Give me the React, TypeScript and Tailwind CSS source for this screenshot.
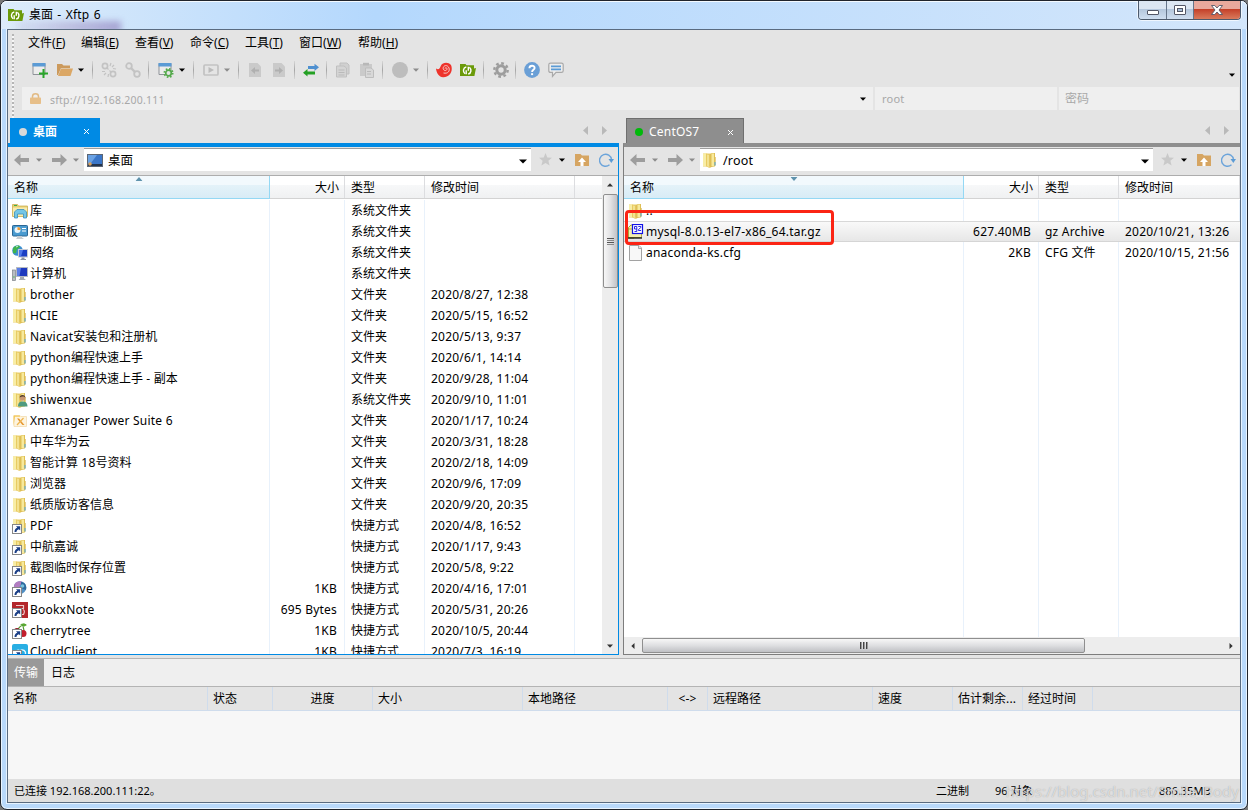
import type { ReactNode } from "react";
import clsx from "clsx";

type IconName =
    | "library" | "panel" | "network" | "computer" | "folder" | "user" | "xmanager"
    | "folderLink" | "bhost" | "bookx" | "cherry" | "cloud" | "archive" | "file";

type Entry = {
    icon: IconName;
    name: string;
    size?: string;
    type?: string;
    date?: string;
};

const localFiles: Entry[] = [
    { icon: "library", name: "库", type: "系统文件夹" },
    { icon: "panel", name: "控制面板", type: "系统文件夹" },
    { icon: "network", name: "网络", type: "系统文件夹" },
    { icon: "computer", name: "计算机", type: "系统文件夹" },
    { icon: "folder", name: "brother", type: "文件夹", date: "2020/8/27, 12:38" },
    { icon: "folder", name: "HCIE", type: "文件夹", date: "2020/5/15, 16:52" },
    { icon: "folder", name: "Navicat安装包和注册机", type: "文件夹", date: "2020/5/13, 9:37" },
    { icon: "folder", name: "python编程快速上手", type: "文件夹", date: "2020/6/1, 14:14" },
    { icon: "folder", name: "python编程快速上手 - 副本", type: "文件夹", date: "2020/9/28, 11:04" },
    { icon: "user", name: "shiwenxue", type: "系统文件夹", date: "2020/9/10, 11:01" },
    { icon: "xmanager", name: "Xmanager Power Suite 6", type: "文件夹", date: "2020/1/17, 10:24" },
    { icon: "folder", name: "中车华为云", type: "文件夹", date: "2020/3/31, 18:28" },
    { icon: "folder", name: "智能计算 18号资料", type: "文件夹", date: "2020/2/18, 14:09" },
    { icon: "folder", name: "浏览器", type: "文件夹", date: "2020/9/6, 17:09" },
    { icon: "folder", name: "纸质版访客信息", type: "文件夹", date: "2020/9/20, 20:35" },
    { icon: "folderLink", name: "PDF", type: "快捷方式", date: "2020/4/8, 16:52" },
    { icon: "folderLink", name: "中航嘉诚", type: "快捷方式", date: "2020/1/17, 9:43" },
    { icon: "folderLink", name: "截图临时保存位置", type: "快捷方式", date: "2020/5/8, 9:22" },
    { icon: "bhost", name: "BHostAlive", size: "1KB", type: "快捷方式", date: "2020/4/16, 17:01" },
    { icon: "bookx", name: "BookxNote", size: "695 Bytes", type: "快捷方式", date: "2020/5/31, 20:26" },
    { icon: "cherry", name: "cherrytree", size: "1KB", type: "快捷方式", date: "2020/10/5, 20:44" },
    { icon: "cloud", name: "CloudClient", size: "1KB", type: "快捷方式", date: "2020/7/3, 16:19" },
];

const remoteFiles: Entry[] = [
    { icon: "folder", name: ".." },
    { icon: "archive", name: "mysql-8.0.13-el7-x86_64.tar.gz", size: "627.40MB", type: "gz Archive", date: "2020/10/21, 13:26" },
    { icon: "file", name: "anaconda-ks.cfg", size: "2KB", type: "CFG 文件", date: "2020/10/15, 21:56" },
];

const menus = [
    { label: "文件", key: "F", w: "w-[53px]" },
    { label: "编辑", key: "E", w: "w-[54px]" },
    { label: "查看", key: "V", w: "w-[55px]" },
    { label: "命令", key: "C", w: "w-[55px]" },
    { label: "工具", key: "T", w: "w-[54px]" },
    { label: "窗口", key: "W", w: "w-[59px]" },
    { label: "帮助", key: "H", w: "w-[60px]" },
];

const transferCols = [
    { label: "名称", w: "w-[200px]", cls: "pl-[5px]" },
    { label: "状态", w: "w-[65px]", cls: "pl-[5px]" },
    { label: "进度", w: "w-[100px]", cls: "justify-center" },
    { label: "大小", w: "w-[150px]", cls: "pl-[5px]" },
    { label: "本地路径", w: "w-[145px]", cls: "pl-[5px]" },
    { label: "<->", w: "w-[40px]", cls: "justify-center" },
    { label: "远程路径", w: "w-[165px]", cls: "pl-[5px]" },
    { label: "速度", w: "w-[80px]", cls: "pl-[5px]" },
    { label: "估计剩余...", w: "w-[70px]", cls: "pl-[5px]" },
    { label: "经过时间", w: "w-[70px]", cls: "pl-[5px]" },
];

// Latin runs are tracked a little wider than the Chinese ones
function T({ children }: { children: string }) {
    return (
        <span className="whitespace-pre">
            {children.split(/([\x20-\x7e]+)/).map((part, i) =>
                i % 2 ? <span key={i} className="tracking-[0.21px]">{part}</span> : part
            )}
        </span>
    );
}

function Svg({ children, className }: { children: ReactNode; className?: string }) {
    return (
        <svg viewBox="0 0 16 16" width="16" height="16" fill="none" className={clsx("shrink-0", className)}>
            {children}
        </svg>
    );
}

function Caret({ className }: { className?: string }) {
    return (
        <svg viewBox="0 0 6 4" width="6" height="4" className={clsx("shrink-0", className)}>
            <path d="M0 0.5h6L3 3.7z" fill="currentColor" />
        </svg>
    );
}

function Sep({ className }: { className: string }) {
    return <div className={clsx("h-[18px] w-px shrink-0 bg-linear-to-b from-[#d6d6d6] via-[#a6a6a6] to-[#d6d6d6]", className)} />;
}

function FolderShape() {
    return (
        <>
            <path d="M1 1.500h12v13H1z" fill="#e9cf6f" />
            <path d="M1 1.500h4v12.500H1z" fill="#f8eda6" />
            <path d="M4 1.500l3.500 1V16L4 14.200z" fill="#e8cb63" />
            <path d="M5 2.500l2 .6V15l-2-.8z" fill="#f3e291" />
            <path d="M7.500 2.500L10 1h3v13l-3 .7-2.500 1.300z" fill="#dfbf55" />
            <path d="M9.500 1.500H12v12.500H9.500z" fill="#f7e99c" />
            <path d="M13.200 5v8.500" stroke="#dcbc58" strokeWidth="1" />
            <path d="M13 10v3.500" stroke="#4da9e6" strokeWidth="1" />
        </>
    );
}

function Shortcut() {
    return (
        <>
            <rect x="0.500" y="6.500" width="9" height="9" fill="#fff" stroke="#868686" />
            <path d="M2.500 14c0-2.500 1-3.800 2.800-4.300L4 8.300h4.200v4.200L6.900 11.200c-1.500.4-2.400 1.300-2.400 2.800z" fill="#1b3f86" />
        </>
    );
}

function FileIcon({ name }: { name: IconName }) {
    switch (name) {
        case "library":
            return (
                <Svg>
                    <path d="M0.500 1.500h5l1 1.500h9v10.500H.5z" fill="#e8cf6e" stroke="#cdb053" strokeWidth="0.800" />
                    <path d="M1 4.500h14v8.500H1z" fill="#f7ebae" />
                    <path d="M2 2.500h3" stroke="#3fae49" strokeWidth="1" />
                    <path d="M2.500 15V9L5 6.500h7L14.500 9v6h-3v-4h-6v4z" fill="#74c6e6" stroke="#3b8fbd" strokeWidth="0.800" />
                </Svg>
            );
        case "panel":
            return (
                <Svg>
                    <rect x="0.500" y="1.500" width="15" height="10.500" rx="0.800" fill="#4a9bd0" stroke="#2a6694" />
                    <circle cx="5.500" cy="6" r="3" fill="#e8f4fb" />
                    <path d="M5.500 6V3a3 3 0 0 1 3 3z" fill="#f29a2e" />
                    <path d="M10 4.500h4M10 7h4" stroke="#fff" strokeWidth="1.200" />
                    <path d="M5 12h5v1.500l2 1.500H4l1-1.500z" fill="#c9cdd1" />
                </Svg>
            );
        case "network":
            return (
                <Svg>
                    <circle cx="5.500" cy="5.500" r="5.300" fill="#3c8fd0" />
                    <path d="M1 3.500C3 0 7 0 8 1.500 7 4 4.500 3.500 4.500 6S3 8.500 1 8z" fill="#3fb54c" />
                    <path d="M4 2l2-1" stroke="#d6f2e0" strokeWidth="1" />
                    <rect x="6.500" y="4.500" width="9" height="7.500" fill="#1b3fc4" stroke="#c8ccd4" />
                    <path d="M7 5h4l-2 6.500H7z" fill="#4f78ea" />
                    <path d="M9.500 12.500h3v1.500h1.500v1H8.500v-1h1z" fill="#8b93a1" />
                </Svg>
            );
        case "computer":
            return (
                <Svg>
                    <rect x="0.500" y="4" width="3" height="10.500" fill="#b9bec4" stroke="#7d8288" strokeWidth="0.700" />
                    <path d="M1.200 11h1.500" stroke="#41b849" strokeWidth="1" />
                    <rect x="4.500" y="1.500" width="11" height="9" fill="#1d39be" stroke="#b5bac2" />
                    <path d="M5 2h4l-1.500 8H5z" fill="#5a7de8" />
                    <path d="M8 11h4v1.500l2 1.500H6.500L8 12.500z" fill="#a3a9b1" />
                </Svg>
            );
        case "user":
            return (
                <Svg>
                    <FolderShape />
                    <circle cx="10.500" cy="6" r="2.800" fill="#c99773" />
                    <path d="M7.700 5.500C7.500 2 13.500 2 13.300 5.500c-1-1.500-4-1.500-5.600 0z" fill="#4f3b2c" />
                    <path d="M6 14.500c0-4 2-5 4.500-5s5 1 5 5z" fill="#4f9b80" />
                </Svg>
            );
        case "xmanager":
            return (
                <Svg>
                    <path d="M2 2.500h6l1 1h5.500v10H2z" fill="#fdf4df" stroke="#f3dcae" strokeWidth="0.800" />
                    <path d="M1.500 13V2.500h6l1 1.300H3z" fill="#f4c95c" />
                    <path d="M5 5.500h2l5.500 6.500h-2z" fill="#e6962c" />
                    <path d="M11.500 5l-6.500 7" stroke="#efb44f" strokeWidth="1.200" />
                </Svg>
            );
        case "folderLink":
            return (
                <Svg>
                    <FolderShape />
                    <Shortcut />
                </Svg>
            );
        case "bhost":
            return (
                <Svg>
                    <circle cx="8" cy="6.500" r="6.300" fill="#4f8fc4" />
                    <path d="M2 5C3 0 8 0 10 .7L7 7 2 8z" fill="#b27cc0" />
                    <path d="M9 1c4 0 6 4 5 8l-5-2z" fill="#2f6a9c" />
                    <circle cx="10.500" cy="5" r="1.800" fill="#79c3de" />
                    <Shortcut />
                </Svg>
            );
        case "bookx":
            return (
                <Svg>
                    <path d="M0 0h16v16H0z" fill="#b3262b" />
                    <path d="M4 3.500h7.500v3H6M11 7.500q2.500 1 .5 5h-2" stroke="#f0c8c8" strokeWidth="1.200" />
                    <Shortcut />
                </Svg>
            );
        case "cherry":
            return (
                <Svg>
                    <path d="M6 7C7 3.500 9 2 14 1.500M11 2c0 3 1 4 1 6" stroke="#4d9a2a" strokeWidth="1.200" />
                    <path d="M8 1.200l4-.9 3 1.700-2.500 1.600z" fill="#5aa832" />
                    <circle cx="11" cy="10.500" r="3.500" fill="#c21d2c" />
                    <circle cx="5" cy="8" r="3" fill="#8f1422" />
                    <Shortcut />
                </Svg>
            );
        case "cloud":
            return (
                <Svg>
                    <rect width="16" height="16" rx="2" fill="#28aee3" />
                    <path d="M4 11c-2-4 2-6 4-4 2-3 7 0 5 4z" stroke="#e8f8ff" strokeWidth="1.300" />
                    <Shortcut />
                </Svg>
            );
        case "archive":
            return (
                <Svg>
                    <path d="M.5 3.500L3 1h3v13H.5z" fill="#f8f6a0" stroke="#8d8f12" strokeWidth="0.800" />
                    <path d="M.5 5h13v8.500H.5z" fill="#f3efb0" stroke="#a49c2c" strokeWidth="0.800" />
                    <path d="M0 14h14" stroke="#111" strokeWidth="1.300" />
                    <rect x="4.500" y="0.500" width="10" height="9" fill="#fff" stroke="#1212e6" strokeWidth="1.200" />
                    <path d="M8.800 2.500v5H6.500M8.800 5H6.500V2.500h2.300M10.300 2.500h2.600v1l-2.400 2v1h2.600" stroke="#1212e6" strokeWidth="0.900" />
                </Svg>
            );
        case "file":
            return (
                <Svg>
                    <path d="M1.500 .5H11L13.500 3v12.500h-12z" fill="#f8f8f8" stroke="#a2a2a2" />
                    <path d="M10.500 .5v3h3" fill="#e4e4e4" stroke="#a2a2a2" strokeWidth="0.900" />
                </Svg>
            );
        default:
            return (
                <Svg>
                    <FolderShape />
                </Svg>
            );
    }
}

function XftpLogo({ className }: { className?: string }) {
    return (
        <Svg className={className}>
            <path d="M0 2h5.500l1 1.200H14V6.500l2-.5-1.600 8H0z" fill="#6b9a0a" />
            <path d="M6.300 4.800C2.800 5.800 2.700 10 5 11.800M6.200 8.200v4" stroke="#fff" strokeWidth="1.400" />
            <path d="M8.200 12.200c3.300-1 3.500-5 1.200-7M8.300 4.800v4" stroke="#fff" strokeWidth="1.400" />
        </Svg>
    );
}

function Toolbar() {
    return (
        <div className="flex h-7 items-center pl-[18px] text-black">
            <Svg>
                <path d="M1 1.500h12v11H1z" fill="#ececec" stroke="#8f9399" />
                <path d="M0.500 1h13v3.500H.5z" fill="#5b9bd5" />
                <path d="M11.500 7v9M7 11.500h9" stroke="#2aa52a" strokeWidth="2" />
            </Svg>
            <Svg className="ml-[9px]">
                <path d="M0 2h5l1.500 1.500H13V6H4L1 13H0z" fill="#cc9a5c" />
                <path d="M4 6.500h12L13.500 14H1z" fill="#dba765" />
            </Svg>
            <Caret className="ml-[5px]" />
            <Sep className="ml-2" />
            <Svg className="ml-2">
                <g stroke="#c3c3c3" strokeWidth="1.700">
                    <circle cx="4" cy="4" r="2.600" />
                    <circle cx="12" cy="12" r="2.600" />
                    <path d="M6 6l1.500 1.500M8.500 8.500L10 10M10 1l-1 3M13 3l-2 2M15 7l-3-.5M1 9.500l3 0M3 13l2-2M7 15l.5-3" strokeWidth="1.200" />
                </g>
            </Svg>
            <Svg className="ml-2">
                <g stroke="#c3c3c3" strokeWidth="1.800">
                    <circle cx="4" cy="4" r="2.800" />
                    <circle cx="12" cy="12" r="2.800" />
                    <path d="M6 6l4 4" strokeWidth="2.400" />
                </g>
            </Svg>
            <Sep className="ml-[7px]" />
            <Svg className="ml-[9px]">
                <path d="M1 1.500h12v11H1z" fill="#ececec" stroke="#8f9399" />
                <path d="M0.500 1h13v3.500H.5z" fill="#5b9bd5" />
                <circle cx="10.500" cy="11" r="2.800" fill="#e4e4e4" stroke="#55aa4c" strokeWidth="1.700" />
                <circle cx="10.500" cy="11" r="4.200" stroke="#55aa4c" strokeWidth="1.700" strokeDasharray="1.600 1.700" />
            </Svg>
            <Caret className="ml-[5px]" />
            <Sep className="ml-2" />
            <Svg className="ml-[9px]">
                <rect x="1" y="3" width="14" height="10" rx="1" stroke="#c2c2c2" strokeWidth="1.700" />
                <path d="M5.500 5v6l5.500-3z" fill="#bbb" />
            </Svg>
            <Caret className="ml-[5px] text-[#8c8c8c]" />
            <Sep className="ml-2" />
            <Svg className="ml-2">
                <path d="M2 1h8.500L14 4.500V15H2z" fill="#cacaca" />
                <path d="M4 8.500l4-3.500v2.500h4v2H8V12z" fill="#b0b0b0" />
            </Svg>
            <Svg className="ml-2">
                <path d="M2 1h8.500L14 4.500V15H2z" fill="#cacaca" />
                <path d="M12 8.500L8 5v2.500H4v2h4V12z" fill="#b0b0b0" />
            </Svg>
            <Sep className="ml-[7px]" />
            <Svg className="ml-2">
                <path d="M16 5.300l-4.500-3.600V4H5v3h6.500v2z" fill="#4f90d0" />
                <path d="M0 10.800l4.500-3.700v2.300H12v3H4.500v2.200z" fill="#24a024" />
            </Svg>
            <Sep className="ml-[7px]" />
            <Svg className="ml-2">
                <path d="M5 1h7l2 2v9H5z" fill="#d0d0d0" stroke="#c0c0c0" />
                <path d="M1.500 4h7.500l2.500 2v9h-10z" fill="#d4d4d4" stroke="#c0c0c0" />
                <path d="M3.500 8h6M3.500 10.500h6M3.500 13h6" stroke="#bababa" />
            </Svg>
            <Svg className="ml-2">
                <path d="M1 2h12v12H1z" fill="#cacaca" />
                <path d="M4 .8h6v2.700H4z" fill="#b8b8b8" />
                <path d="M6.500 6H12l2.500 2v7.500h-8z" fill="#d8d8d8" stroke="#bdbdbd" />
                <path d="M8 9.500h4M8 12h4" stroke="#bababa" />
            </Svg>
            <Sep className="ml-[7px]" />
            <Svg className="ml-[9px]">
                <circle cx="8" cy="8" r="8" fill="#bdbdbd" />
            </Svg>
            <Caret className="ml-[5px] text-[#8c8c8c]" />
            <Sep className="ml-2" />
            <Svg className="ml-2">
                <path d="M0 6.500c3 2 4-.5 5-3C6.500.5 12-.5 15 3c2.500 6-1.500 12.500-8 12.200C3 15 .5 11 0 6.500z" fill="#ee332b" />
                <path d="M7.500 11c4.500 1 6.500-2 5.500-5C11.300 2 7 3.500 7.200 6.500c.3 2.800 4 2.500 3.800.2-.3-1.400-2-1.200-1.900-.2" stroke="#f7d9d6" strokeWidth="0.900" />
            </Svg>
            <XftpLogo className="ml-2" />
            <Sep className="ml-[7px]" />
            <Svg className="ml-[9px]">
                <circle cx="8" cy="8" r="4.200" stroke="#9d9d9d" strokeWidth="3" />
                <circle cx="8" cy="8" r="6.700" stroke="#9d9d9d" strokeWidth="2.400" strokeDasharray="2.700 2.562" />
            </Svg>
            <Sep className="ml-1.5" />
            <Svg className="ml-2">
                <circle cx="8" cy="8" r="7.900" fill="#6a9fd6" />
                <path d="M5.400 6.200C5.500 3 10.600 3 10.600 6c0 1.800-2.500 1.800-2.500 3.900" stroke="#fff" strokeWidth="1.900" />
                <path d="M7.100 11.200h2v1.900h-2z" fill="#fff" />
            </Svg>
            <Svg className="ml-2">
                <path d="M2.500 1.200h11q1.700 0 1.700 1.500v6q0 1.700-1.700 1.700H8l-3.500 4v-4h-2Q.8 10.400.8 8.700v-6q0-1.500 1.700-1.500z" fill="#eee" stroke="#a9a9a9" strokeWidth="1.200" />
                <path d="M3 4.300h10M3 7.300h10" stroke="#5b9bd5" strokeWidth="1.800" />
            </Svg>
            <Caret className="mt-[10px] mr-[5px] ml-auto" />
        </div>
    );
}

function TabArrows({ className }: { className: string }) {
    return (
        <div className={clsx("flex h-[25px] items-center gap-[14px] text-[#b9b9b9]", className)}>
            <svg width="5" height="9" viewBox="0 0 5 9"><path d="M5 0v9L0 4.500z" fill="currentColor" /></svg>
            <svg width="5" height="9" viewBox="0 0 5 9"><path d="M0 0v9l5-4.500z" fill="currentColor" /></svg>
        </div>
    );
}

function CloseX() {
    return (
        <svg width="7" height="7" viewBox="0 0 7 7">
            <path d="M1 1l5 5M6 1L1 6" stroke="#fff" strokeWidth="1" />
        </svg>
    );
}

function BackArrow({ flip }: { flip?: boolean }) {
    return (
        <svg width="15" height="12" viewBox="0 0 15 12" className={clsx("shrink-0", flip && "-scale-x-100")}>
            <path d="M0 6l6.500-6v4H15v4H6.500v4z" fill="#9d9d9d" />
        </svg>
    );
}

function PathBar({ path, children, className }: { path: string; children: ReactNode; className: string }) {
    return (
        <div className={clsx("flex h-[29px] shrink-0 border-b border-[#adadad] bg-[#e4e4e4]", className)}>
            <div className="flex h-[25px] w-[71px] shrink-0 items-center pl-px">
                <BackArrow />
                <Caret className="ml-[7px] text-[#8c8c8c]" />
                <div className="w-[10px]" />
                <BackArrow flip />
                <Caret className="ml-[6px] text-[#8c8c8c]" />
            </div>
            <div className="mt-px flex h-[23px] flex-1 items-center border-t border-[#9e9e9e] bg-white pl-[2px]">
                {children}
                <span className="mt-[2px] ml-[5px] text-[12.5px]"><T>{path}</T></span>
                <svg width="8" height="5" viewBox="0 0 8 5" className="mt-[3px] mr-1 ml-auto">
                    <path d="M0 .5h8l-4 4z" fill="#000" />
                </svg>
            </div>
            <div className="flex h-[25px] w-[87px] shrink-0 items-center pl-2">
                <svg width="13" height="13" viewBox="0 0 13 13">
                    <path d="M6.500 0l1.800 4.500 4.700.3-3.600 3 1.200 4.700-4.100-2.600-4.100 2.600 1.200-4.700-3.600-3 4.700-.3z" fill="#c9c9c9" />
                </svg>
                <Caret className="ml-[7px]" />
                <svg width="14" height="14" viewBox="0 0 14 14" className="ml-[10px]">
                    <path d="M0 1h5.500L7 2.500h7V13H0z" fill="#d6a562" />
                    <path d="M7 4.500L11 9H8.500v4h-3V9H3z" fill="#fff" />
                </svg>
                <svg width="15" height="14" viewBox="0 0 15 14" fill="none" className="ml-[10px]">
                    <path d="M10.500 11.800A6 6 0 1 1 12.500 6.500" stroke="#6ca4da" strokeWidth="1.400" />
                    <path d="M9.500 6H15l-2.700 4z" fill="#5b9bd5" />
                </svg>
            </div>
        </div>
    );
}

function ListHeader({ nameW, sizeW, dateW, up }: { nameW: string; sizeW: string; dateW: string; up?: boolean }) {
    const cell = "flex items-center border-r border-[#dcdde0] pt-[2px]";
    return (
        <div className="flex h-[23px] shrink-0 border-b border-[#d3d3d3] bg-linear-to-b from-white from-40% via-[#f7f8f9] via-40% to-[#f0f1f2]">
            <div className={clsx("relative -mb-px flex shrink-0 items-center border-r border-b border-[#94d8f4] bg-linear-to-b from-[#f2f9fd] from-40% via-[#e4f2f9] via-40% to-[#d8ecf6] pt-[2px] pl-[6px]", nameW)}>
                <T>名称</T>
                <svg width="7" height="4" viewBox="0 0 7 4" className="absolute top-px left-1/2 -translate-x-1/2">
                    <path d={up ? "M0 4h7L3.500 0z" : "M0 0h7L3.500 4z"} fill="#5f93ad" />
                </svg>
            </div>
            <div className={clsx(cell, "shrink-0 justify-end pr-[5px]", sizeW)}><T>大小</T></div>
            <div className={clsx(cell, "w-[80px] shrink-0 pl-[6px]")}><T>类型</T></div>
            <div className={clsx(cell, "shrink-0 pl-[6px]", dateW)}><T>修改时间</T></div>
        </div>
    );
}

function FileRow({ entry, nameW, sizeW, dateW, selected }: { entry?: Entry; nameW: string; sizeW: string; dateW: string; selected?: boolean }) {
    const cell = clsx("flex shrink-0 items-center border-r", selected ? "border-transparent" : "border-[#e8f1fb]");
    return (
        <div
            className={clsx(
                "flex",
                entry ? "h-[21px] shrink-0" : "flex-1",
                selected && "bg-linear-to-b from-[#fafafa] to-[#e6e6e6] shadow-[inset_0_1px_0_#d8d8d8,inset_0_-1px_0_#d5d5d5]"
            )}
        >
            <div className={clsx(cell, nameW, "pl-1")}>
                {entry && <FileIcon name={entry.icon} />}
                {entry && <span className="ml-[2px]"><T>{entry.name}</T></span>}
            </div>
            <div className={clsx(cell, "justify-end pr-[7px]", sizeW)}>{entry?.size && <T>{entry.size}</T>}</div>
            <div className={clsx(cell, "w-[80px] pl-[6px]")}>{entry?.type && <T>{entry.type}</T>}</div>
            <div className={clsx(cell, "pl-[6px]", dateW)}>{entry?.date && <T>{entry.date}</T>}</div>
        </div>
    );
}

function LocalPane() {
    const cols = { nameW: "w-[262px]", sizeW: "w-[75px]", dateW: "w-[150px]" };
    return (
        <div className="flex w-[611px] shrink-0 flex-col">
            <div className="flex h-[25px] shrink-0">
                <div className="ml-[2px] flex w-[90px] items-center bg-[#008ae4] pt-[2px] pl-[9px] text-white">
                    <span className="size-[8px] rounded-full bg-[#d9d9d9]" />
                    <span className="ml-[6px] flex-1 font-bold"><T>桌面</T></span>
                    <span className="mr-[10px]"><CloseX /></span>
                </div>
                <TabArrows className="mr-[12px] ml-auto" />
            </div>
            <div className="flex min-h-0 flex-1 flex-col border-t-4 border-r border-b border-[#008ae4] bg-white">
                <PathBar path="桌面" className="pl-[5px]">
                    <svg width="16" height="13" viewBox="0 0 16 13" className="ml-px">
                        <rect x="0.500" y="0.500" width="15" height="12" fill="#3a76c8" stroke="#5c6674" />
                        <path d="M1 1h9L4 9H1z" fill="#6aa2e4" />
                        <path d="M1 10h14v2H1z" fill="#22344e" />
                        <circle cx="3" cy="10" r="1.800" fill="#d8a05c" />
                    </svg>
                </PathBar>
                <div className="flex min-h-0 flex-1">
                    <div className="flex min-w-0 flex-1 flex-col overflow-hidden">
                        <ListHeader {...cols} up />
                        <div className="flex min-h-0 flex-1 flex-col overflow-hidden pt-px">
                            {localFiles.map((f) => (
                                <FileRow key={f.name} entry={f} {...cols} />
                            ))}
                        </div>
                    </div>
                    {/* vertical scrollbar */}
                    <div className="flex w-4 shrink-0 flex-col items-center bg-[#ededed]">
                        <div className="flex h-[18px] items-center text-[#333]">
                            <Caret className="rotate-180" />
                        </div>
                        <div className="flex h-[94px] w-[15px] flex-col items-center justify-center gap-px rounded-[2px] border border-[#8f8f8f] bg-linear-to-r from-[#f7f7f7] via-[#e2e2e4] to-[#c2c3c7]">
                            <i className="h-px w-[7px] bg-[#555]" />
                            <i className="h-px w-[7px] bg-[#888]" />
                            <i className="h-px w-[7px] bg-[#555]" />
                            <i className="h-px w-[7px] bg-[#888]" />
                        </div>
                        <Caret className="mt-auto mb-[6px] text-[#333]" />
                    </div>
                </div>
            </div>
        </div>
    );
}

function RemotePane() {
    const cols = { nameW: "w-[340px]", sizeW: "w-[75px]", dateW: "w-[121px]" };
    return (
        <div className="ml-1 flex min-w-0 flex-1 flex-col">
            <div className="flex h-[25px] shrink-0">
                <div className="ml-[3px] flex w-[118px] items-center border border-b-0 border-[#6f6f6f] bg-[#8e8e8e] pt-[2px] pl-2 text-white">
                    <span className="size-[8px] rounded-full bg-[#00b90a]" />
                    <span className="ml-[6px] flex-1"><T>CentOS7</T></span>
                    <span className="mr-[9px]"><CloseX /></span>
                </div>
                <TabArrows className="mr-[11px] ml-auto" />
            </div>
            <div className="flex min-h-0 flex-1 flex-col border-t-4 border-b border-l border-t-[#8e8e8e] border-b-[#7d7d7d] border-l-[#7d7d7d] bg-white">
                <PathBar path="/root" className="pl-[5px]">
                    <FileIcon name="folder" />
                </PathBar>
                <ListHeader {...cols} />
                <div className="relative flex min-h-0 flex-1 flex-col pt-px">
                    {remoteFiles.map((f, i) => (
                        <FileRow key={f.name} entry={f} selected={i === 1} {...cols} />
                    ))}
                    <FileRow {...cols} />
                    {/* highlight over the selected archive */}
                    <div className="absolute top-[11px] left-[1px] h-[35px] w-[209px] rounded-[4px] border-[3px] border-[#fb2414]" />
                </div>
                {/* horizontal scrollbar */}
                <div className="flex h-[17px] shrink-0 items-center bg-[#ededed] px-[6px] text-[#333]">
                    <Caret className="rotate-90" />
                    <div className="ml-[6px] flex h-[15px] w-[443px] items-center justify-center gap-[2px] rounded-[2px] border border-[#8f8f8f] bg-linear-to-b from-[#f7f7f7] via-[#dedfe1] to-[#bfc0c4]">
                        <i className="h-[7px] w-px bg-[#444] shadow-[1px_0_0_#999]" />
                        <i className="h-[7px] w-px bg-[#444] shadow-[1px_0_0_#999]" />
                        <i className="h-[7px] w-px bg-[#444] shadow-[1px_0_0_#999]" />
                    </div>
                    <Caret className="ml-auto -rotate-90" />
                </div>
            </div>
        </div>
    );
}

function TransferPane() {
    return (
        <div className="mt-[3px] flex h-[121px] shrink-0 flex-col border-t border-[#b4b4b4] bg-[#f7f7f7]">
            <div className="flex h-7 shrink-0 items-stretch border-b border-[#b4b4b4] bg-[#efefef]">
                <div className="flex w-9 items-center justify-center bg-[#999] text-white"><T>传输</T></div>
                <div className="flex items-center pl-[7px]"><T>日志</T></div>
            </div>
            <div className="flex h-6 shrink-0 border-b border-[#cfdcec] bg-[#e4e4e4]">
                {transferCols.map((c) => (
                    <div key={c.label} className={clsx("flex shrink-0 items-center border-r border-[#cfdcec]", c.w, c.cls)}>
                        <T>{c.label}</T>
                    </div>
                ))}
            </div>
        </div>
    );
}

function WindowButtons() {
    return (
        <div className="mr-[6px] flex h-[19px] w-[103px] overflow-hidden rounded-b-[4px] border border-t-0 border-[#4d5a6c] shadow-[0_0_0_1px_#ffffffaa]">
            <div className="flex w-7 items-center justify-center border-r border-[#66758a] bg-linear-to-b from-[#dce6f2] from-45% via-[#b4c6dc] via-45% to-[#cfdef0]">
                <svg width="12" height="5" viewBox="0 0 12 5" className="mt-1"><rect x="0.500" y="0.500" width="11" height="4" rx="0.500" fill="#fff" stroke="#535666" /></svg>
            </div>
            <div className="flex w-[27px] items-center justify-center border-r border-[#66758a] bg-linear-to-b from-[#dce6f2] from-45% via-[#b4c6dc] via-45% to-[#cfdef0]">
                <svg width="12" height="10" viewBox="0 0 12 10">
                    <rect x="0.500" y="0.500" width="11" height="9" rx="0.500" fill="#fff" stroke="#535666" />
                    <rect x="3.500" y="3.500" width="5" height="3" fill="#a9bfd8" stroke="#535666" />
                </svg>
            </div>
            <div className="flex flex-1 items-center justify-center bg-linear-to-b from-[#e9a99d] from-45% via-[#c33e27] via-45% to-[#d97a5c]">
                <svg width="12" height="10" viewBox="0 0 12 10">
                    <path d="M.5.5h3.300L6 3l2.200-2.500h3.300L8 5l3.500 4.500H8.200L6 7 3.800 9.500H.5L4 5z" fill="#fff" stroke="#535666" strokeWidth="0.900" />
                </svg>
            </div>
        </div>
    );
}

export default function App() {
    return (
        <div className="h-[810px] w-[1248px] overflow-hidden bg-[#777] font-['Noto_Sans','Noto_Sans_CJK_SC',sans-serif] text-[12px] leading-4 text-black">
            <div className="flex h-full flex-col rounded-[7px] border border-[#20242c] bg-[#b9d9fb] px-[6px] pb-[6px] shadow-[inset_0_0_0_1px_#eaf5ff]">
                {/* title bar */}
                <div className="relative -mx-[6px] flex h-7 shrink-0 overflow-hidden rounded-t-[6px] bg-linear-to-r from-[#dcebfa] via-[#b4d8fd] via-30% to-[#d3e6fb] shadow-[inset_0_1px_0_#f4faff]">
                    <div className="absolute top-[20px] left-[15px] h-3 w-[105px] bg-linear-to-r from-[#9c86bb]/10 via-[#9c86bb]/40 to-[#8a78b8]/60 blur-[3px]" />
                    <div className="relative flex flex-1 items-center pb-px pl-[7px]">
                        <XftpLogo />
                        <span className="ml-[5px] [word-spacing:1px]"><T>桌面 - Xftp 6</T></span>
                    </div>
                    <WindowButtons />
                </div>
                <div className="flex min-h-0 flex-1 flex-col border border-[#5a6b80] bg-[#e4e4e4] shadow-[0_0_0_1px_#e6f3ff]">
                    <div className="flex h-[88px] shrink-0">
                        <div className="mt-1 ml-1 w-[2px] bg-[repeating-linear-gradient(to_bottom,#b5b5b5_0_2px,#f6f6f6_2px_4px)]" />
                        <div className="flex flex-1 flex-col">
                            <div className="flex h-[26px] items-center pl-[14px]">
                                {menus.map((m) => (
                                    <div key={m.key} className={m.w}>
                                        {m.label}(<span className="underline">{m.key}</span>)
                                    </div>
                                ))}
                            </div>
                            <Toolbar />
                            <div className="mt-[3px] flex h-[23px] gap-[2px] pl-2 text-[#a8a8a8]">
                                <div className="flex w-[851px] items-center bg-[#efefef] pl-2">
                                    <svg width="11" height="11" viewBox="0 0 11 11" fill="none">
                                        <path d="M2.500 5V3.500a3 2.700 0 0 1 6 0V5" stroke="#e2ba83" strokeWidth="1.500" />
                                        <rect y="4.500" width="11" height="6.500" rx="0.800" fill="#e7bf89" />
                                    </svg>
                                    <span className="mt-[2px] ml-[9px] text-[10.5px]"><T>sftp://192.168.200.111</T></span>
                                    <Caret className="mr-[7px] ml-auto text-black" />
                                </div>
                                <div className="flex w-[182px] items-center bg-[#efefef] pl-[7px] text-[11px]"><T>root</T></div>
                                <div className="mr-px flex flex-1 items-center bg-[#efefef] pl-[6px]"><T>密码</T></div>
                            </div>
                        </div>
                    </div>
                    <div className="flex min-h-0 flex-1">
                        <LocalPane />
                        <RemotePane />
                    </div>
                    <TransferPane />
                    {/* status bar */}
                    <div className="relative flex h-[23px] shrink-0 items-center bg-[#dfdfdf] pl-[6px] text-[11px]">
                        <span className="w-[922px]">已连接 192.168.200.111:22。</span>
                        <span className="w-[59px]">二进制</span>
                        <span className="w-[164px]">96 对象</span>
                        <span>886.35MB</span>
                        <div className="absolute right-[1px] bottom-[3px] text-[15px] leading-4 whitespace-nowrap text-white/60 [text-shadow:0_0_1px_#999]">
                            https://blog.csdn.net/Smile_Body
                        </div>
                    </div>
                </div>
            </div>
        </div>
    );
}
